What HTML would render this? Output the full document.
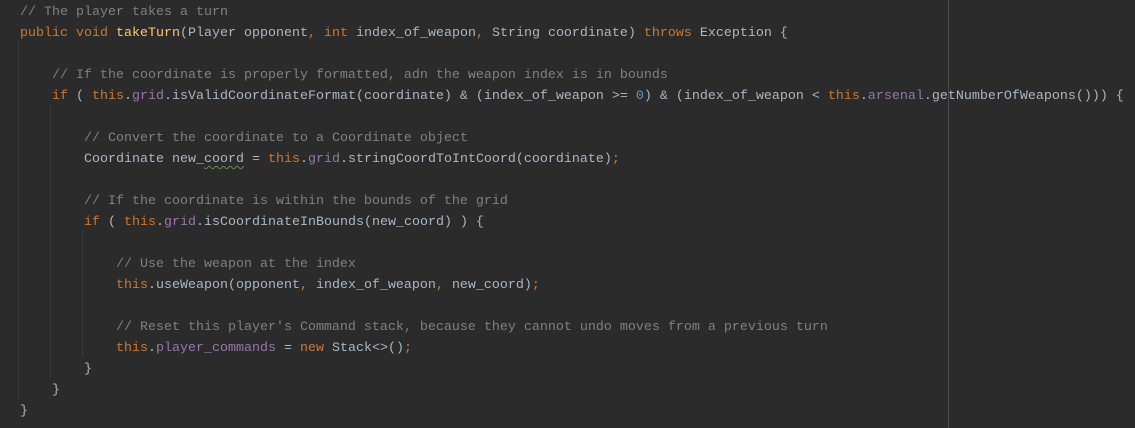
<!DOCTYPE html>
<html><head><meta charset="utf-8"><style>
html,body{margin:0;padding:0;background:#2b2b2b;width:1135px;height:428px;overflow:hidden}
pre{position:absolute;left:20px;top:2px;margin:0;font-family:"Liberation Mono",monospace;font-size:13.33px;line-height:21px;color:#a9b7c6}
.c{color:#808080}.k{color:#cc7832}.m{color:#ffc66d}.f{color:#9876aa}.n{color:#6897bb}
.w{text-decoration:underline wavy #6a8759;text-underline-offset:3px;text-decoration-thickness:1px}
.g{position:absolute;width:1px;background:#3b3b3b}
</style></head><body>
<div class="g" style="left:18px;top:42px;height:357px"></div>
<div class="g" style="left:50px;top:105px;height:273px"></div>
<div class="g" style="left:82px;top:231px;height:126px"></div>
<div style="position:absolute;left:948px;top:0;width:1px;height:428px;background:#4a4a4a"></div>
<pre><span class="c">// The player takes a turn</span>
<span class="k">public void </span><span class="m">takeTurn</span>(Player opponent<span class="k">, int </span>index_of_weapon<span class="k">, </span>String coordinate) <span class="k">throws </span>Exception {

    <span class="c">// If the coordinate is properly formatted, adn the weapon index is in bounds</span>
    <span class="k">if </span>( <span class="k">this</span>.<span class="f">grid</span>.isValidCoordinateFormat(coordinate) &amp; (index_of_weapon &gt;= <span class="n">0</span>) &amp; (index_of_weapon &lt; <span class="k">this</span>.<span class="f">arsenal</span>.getNumberOfWeapons())) {

        <span class="c">// Convert the coordinate to a Coordinate object</span>
        Coordinate new_<span class="w">coord</span> = <span class="k">this</span>.<span class="f">grid</span>.stringCoordToIntCoord(coordinate)<span class="k">;</span>

        <span class="c">// If the coordinate is within the bounds of the grid</span>
        <span class="k">if </span>( <span class="k">this</span>.<span class="f">grid</span>.isCoordinateInBounds(new_coord) ) {

            <span class="c">// Use the weapon at the index</span>
            <span class="k">this</span>.useWeapon(opponent<span class="k">, </span>index_of_weapon<span class="k">, </span>new_coord)<span class="k">;</span>

            <span class="c">// Reset this player's Command stack, because they cannot undo moves from a previous turn</span>
            <span class="k">this</span>.<span class="f">player_commands </span>= <span class="k">new </span>Stack&lt;&gt;()<span class="k">;</span>
        }
    }
}</pre>
</body></html>
